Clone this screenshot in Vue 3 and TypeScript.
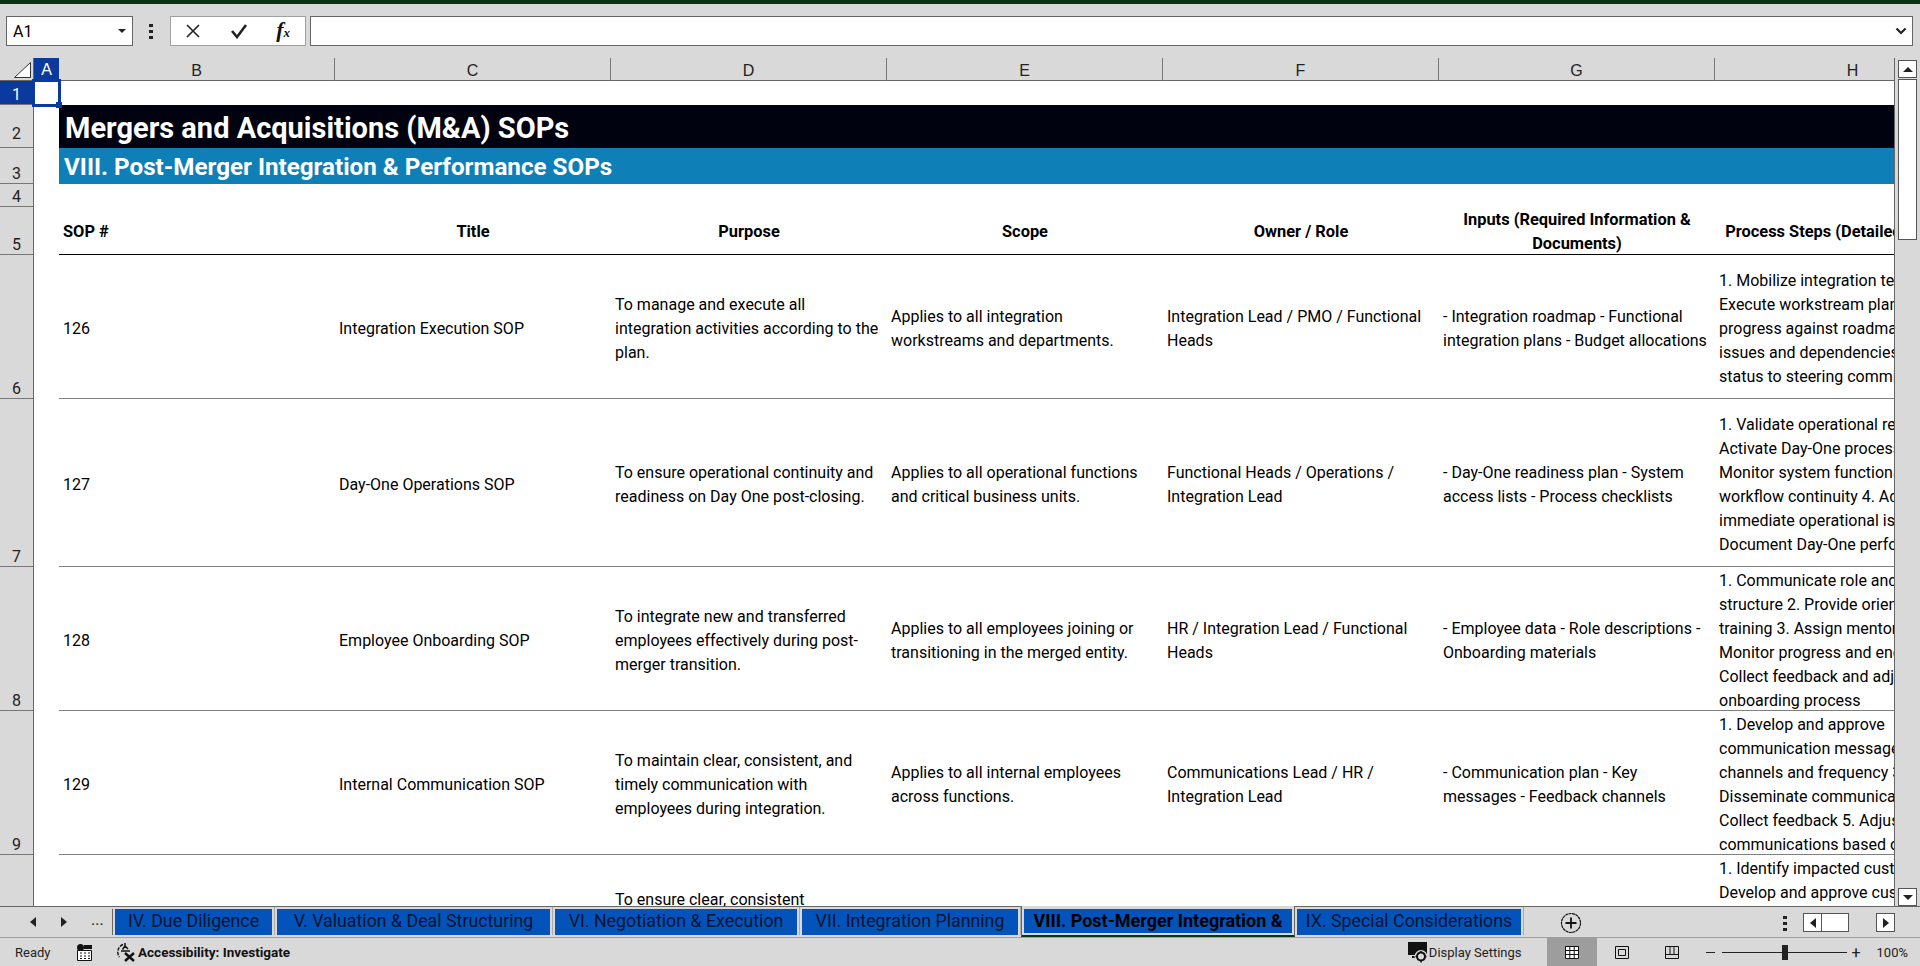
<template>
  <div class="excel">
    <div class="titlebar"></div>

    <div class="formula-bar">
      <div class="name-box">
        <span>A1</span>
        <svg width="8" height="4" viewBox="0 0 8 4"><path d="M0 0h8L4 4z" fill="#222" /></svg>
      </div>
      <div class="vdots"><i></i><i></i><i></i></div>
      <div class="fx-buttons">
        <svg width="16" height="16" viewBox="0 0 16 16"><path d="M2 2l12 12M14 2L2 14" stroke="#222" stroke-width="1.6" fill="none" /></svg>
        <svg width="18" height="16" viewBox="0 0 18 16"><path d="M2 8l5 6L16 2" stroke="#222" stroke-width="2.6" fill="none" /></svg>
        <span class="fx">f<small>x</small></span>
      </div>
      <div class="formula-input">
        <svg width="12" height="8" viewBox="0 0 12 8"><path d="M1.5 1.5L6 6l4.500-4.500" stroke="#222" stroke-width="2.200" fill="none" /></svg>
      </div>
    </div>

    <div class="workarea">
      <div class="sheet">
        <div class="corner">
          <svg width="17" height="16" viewBox="0 0 17 16"><path d="M16.500 0.500V15.500H0.500z" fill="#fff" stroke="#333" /></svg>
        </div>
        <div v-for="c in columns" :key="c" class="col-head" :class="{ selected: c === 'A' }">{{ c }}</div>

        <div class="row-head selected">1</div>
        <div class="active-cell"><span class="fill-handle"></span></div>
        <div class="span-cell"></div>

        <div class="row-head tall-label">2</div>
        <div></div>
        <div class="span-cell band-title">Mergers and Acquisitions (M&amp;A) SOPs</div>

        <div class="row-head">3</div>
        <div></div>
        <div class="span-cell band-sub">VIII. Post-Merger Integration &amp; Performance SOPs</div>

        <div class="row-head">4</div>
        <div></div>
        <div class="span-cell"></div>

        <div class="row-head">5</div>
        <div></div>
        <div class="th left">SOP #</div>
        <div v-for="h in headers" :key="h" class="th">{{ h }}</div>

        <template v-for="r in rows" :key="r.label">
          <div class="row-head">{{ r.label }}</div>
          <div></div>
          <div class="td">{{ r.num }}</div>
          <div class="td">{{ r.title }}</div>
          <div class="td" :class="{ 'td-raised': r.label === 10 }">{{ r.purpose.join("\n") }}</div>
          <div class="td">{{ r.scope.join("\n") }}</div>
          <div class="td">{{ r.owner.join("\n") }}</div>
          <div class="td">{{ r.inputs.join("\n") }}</div>
          <div class="td">{{ r.steps.join("\n") }}</div>
        </template>
      </div>

      <div class="vscroll">
        <div class="scroll-btn">
          <svg width="10" height="5" viewBox="0 0 10 5"><path d="M5 0l5 5H0z" fill="#222" /></svg>
        </div>
        <div class="vthumb"></div>
        <div class="scroll-btn down">
          <svg width="10" height="5" viewBox="0 0 10 5"><path d="M0 0h10L5 5z" fill="#222" /></svg>
        </div>
      </div>
    </div>

    <div class="tabstrip">
      <div class="tab-nav">
        <svg width="6" height="10" viewBox="0 0 6 10"><path d="M6 0v10L0 5z" fill="#222" /></svg>
        <svg width="6" height="10" viewBox="0 0 6 10"><path d="M0 0v10l6-5z" fill="#222" /></svg>
        <span class="ellipsis">...</span>
      </div>
      <div
        v-for="t in tabs"
        :key="t.name"
        class="tab-wrap"
        :class="{ active: t.active }"
      >
        <div class="tab" :style="{ width: t.width + 'px' }">{{ t.name }}</div>
      </div>
      <div class="add-sheet">
        <svg width="22" height="22" viewBox="0 0 22 22">
          <circle cx="11" cy="11" r="9.500" fill="none" stroke="#111" stroke-width="1.200" stroke-dasharray="3 0.500" />
          <path d="M11 5.500v11M5.500 11h11" stroke="#111" stroke-width="1.800" />
        </svg>
      </div>
      <div class="strip-end">
        <div class="vdots"><i></i><i></i><i></i></div>
        <div class="hscroll">
          <div class="hbtn">
            <svg width="6" height="10" viewBox="0 0 6 10"><path d="M6 0v10L0 5z" fill="#222" /></svg>
          </div>
          <div class="hthumb"></div>
          <div class="hbtn right">
            <svg width="6" height="10" viewBox="0 0 6 10"><path d="M0 0v10l6-5z" fill="#222" /></svg>
          </div>
        </div>
      </div>
    </div>

    <div class="statusbar">
      <span class="ready">Ready</span>
      <svg class="calc" width="15" height="17" viewBox="0 0 15 17">
        <circle cx="3.500" cy="3.500" r="3.500" fill="#111" />
        <path d="M7 1h8v4H7z" fill="#111" />
        <path d="M0.500 6.500h14v10H0.500z" fill="#fff" stroke="#111" />
        <path d="M3 9h2M7 9h2M11 9h2M3 12h2M7 12h2M11 12h2M3 14.500h2M7 14.500h2M11 14.500h2" stroke="#111" stroke-width="1.200" />
      </svg>
      <svg class="a11y" width="20" height="20" viewBox="0 0 20 20">
        <path d="M7 2.500A8 8 0 0 0 3.500 15" fill="none" stroke="#111" stroke-width="1.400" stroke-dasharray="3.500 1.200" />
        <path d="M9 1v3M9 4L6.500 7.500M9 4l3 3M5 9h9" fill="none" stroke="#111" stroke-width="1.500" />
        <path d="M9 11l9 8M18 11l-9 8" stroke="#111" stroke-width="2.400" />
      </svg>
      <span class="a11y-text">Accessibility: Investigate</span>

      <svg class="display-icon" width="20" height="21" viewBox="0 0 20 21">
        <path d="M0 0h19v13H0zM4 14h4v2H4z" fill="#111" />
        <circle cx="13" cy="14.500" r="6.500" fill="#d9d9d9" />
        <circle cx="13" cy="14.500" r="4" fill="none" stroke="#111" stroke-width="2" />
        <path d="M13 9v2M13 18v2.500M7.500 14.500h2M16.500 14.500h2M9.500 11l1.200 1.200M15.300 16.800l1.200 1.200M16.500 11l-1.200 1.200M10.700 16.800l-1.200 1.200" stroke="#111" stroke-width="1.500" />
      </svg>
      <span class="display-text">Display Settings</span>

      <div class="view-btn on">
        <svg width="14" height="13" viewBox="0 0 14 13">
          <path d="M0.500 0.500h13v12h-13zM0.500 4.500h13M0.500 8.500h13M4.800 0.500v12M9.200 0.500v12" fill="#fff" stroke="#111" />
        </svg>
      </div>
      <div class="view-btn">
        <svg width="14" height="13" viewBox="0 0 14 13">
          <path d="M0.500 0.500h13v12h-13z" fill="none" stroke="#111" />
          <path d="M3.500 3.500h7v6h-7z" fill="none" stroke="#111" />
        </svg>
      </div>
      <div class="view-btn">
        <svg width="14" height="13" viewBox="0 0 14 13">
          <path d="M0.500 0.500h13v12h-13zM0.500 8.500h13M5 0.500v8M9 0.500v8" fill="none" stroke="#111" />
        </svg>
      </div>
      <div class="zoom">
        <span class="zoom-minus"></span>
        <div class="slider"><span class="slider-thumb"></span></div>
        <span class="zoom-plus">+</span>
        <span class="zoom-val">100%</span>
      </div>
    </div>
  </div>
</template>

<script setup lang="ts">
interface SopRow {
  label: number;
  num: string;
  title: string;
  purpose: string[];
  scope: string[];
  owner: string[];
  inputs: string[];
  steps: string[];
}

interface SheetTab {
  name: string;
  width: number;
  active?: boolean;
}

const columns = ["A", "B", "C", "D", "E", "F", "G", "H"];

const headers = [
  "Title",
  "Purpose",
  "Scope",
  "Owner / Role",
  "Inputs (Required Information &\nDocuments)",
  "Process Steps (Detailed Workflow)",
];

const rows: SopRow[] = [
  {
    label: 6,
    num: "126",
    title: "Integration Execution SOP",
    purpose: ["To manage and execute all", "integration activities according to the", "plan."],
    scope: ["Applies to all integration", "workstreams and departments."],
    owner: ["Integration Lead / PMO / Functional", "Heads"],
    inputs: ["- Integration roadmap - Functional", "integration plans - Budget allocations"],
    steps: [
      "1. Mobilize integration teams 2.",
      "Execute workstream plans 3. Track",
      "progress against roadmap 4. Resolve",
      "issues and dependencies 5. Report",
      "status to steering committee",
    ],
  },
  {
    label: 7,
    num: "127",
    title: "Day-One Operations SOP",
    purpose: ["To ensure operational continuity and", "readiness on Day One post-closing."],
    scope: ["Applies to all operational functions", "and critical business units."],
    owner: ["Functional Heads / Operations /", "Integration Lead"],
    inputs: ["- Day-One readiness plan - System", "access lists - Process checklists"],
    steps: [
      "1. Validate operational readiness 2.",
      "Activate Day-One processes 3.",
      "Monitor system functionality and",
      "workflow continuity 4. Address",
      "immediate operational issues 5.",
      "Document Day-One performance",
    ],
  },
  {
    label: 8,
    num: "128",
    title: "Employee Onboarding SOP",
    purpose: ["To integrate new and transferred", "employees effectively during post-", "merger transition."],
    scope: ["Applies to all employees joining or", "transitioning in the merged entity."],
    owner: ["HR / Integration Lead / Functional", "Heads"],
    inputs: ["- Employee data - Role descriptions -", "Onboarding materials"],
    steps: [
      "1. Communicate role and",
      "structure 2. Provide orientation and",
      "training 3. Assign mentors 4.",
      "Monitor progress and engagement 5.",
      "Collect feedback and adjust",
      "onboarding process",
    ],
  },
  {
    label: 9,
    num: "129",
    title: "Internal Communication SOP",
    purpose: ["To maintain clear, consistent, and", "timely communication with", "employees during integration."],
    scope: ["Applies to all internal employees", "across functions."],
    owner: ["Communications Lead / HR /", "Integration Lead"],
    inputs: ["- Communication plan - Key", "messages - Feedback channels"],
    steps: [
      "1. Develop and approve",
      "communication messages 2. Define",
      "channels and frequency 3.",
      "Disseminate communications 4.",
      "Collect feedback 5. Adjust",
      "communications based on input",
    ],
  },
  {
    label: 10,
    num: "",
    title: "",
    purpose: ["To ensure clear, consistent", " ", " "],
    scope: [],
    owner: [],
    inputs: [],
    steps: ["1. Identify impacted customers", "Develop and approve customer", " ", " ", " ", " "],
  },
];

const tabs: SheetTab[] = [
  { name: "IV. Due Diligence", width: 157 },
  { name: "V. Valuation & Deal Structuring", width: 273 },
  { name: "VI. Negotiation & Execution", width: 242 },
  { name: "VII. Integration Planning", width: 216 },
  { name: "VIII. Post-Merger Integration &", width: 268, active: true },
  { name: "IX. Special Considerations", width: 224 },
];
</script>

<style scoped>
.excel {
  width: 1920px;
  height: 966px;
  display: flex;
  flex-direction: column;
  overflow: hidden;
  background: #d9d9d9;
  font-family: Roboto, "Liberation Sans", sans-serif;
  color: #000;
}

.titlebar {
  height: 4px;
  background: #0a3515;
}

.formula-bar {
  height: 54px;
  display: flex;
  align-items: flex-start;
  padding: 12px 7px 0 6px;
  box-sizing: border-box;
}

.name-box {
  width: 127px;
  height: 30px;
  background: #fff;
  border: 1px solid #666;
  box-sizing: border-box;
  display: flex;
  align-items: center;
  justify-content: space-between;
  padding: 0 6px 0 6px;
  font-size: 16px;
}

.vdots {
  display: flex;
  flex-direction: column;
  gap: 3px;
  width: 4px;
}

.vdots i {
  display: block;
  width: 4px;
  height: 3px;
  background: #222;
}

.formula-bar > .vdots {
  margin: 8px 17px 0 16px;
}

.fx-buttons {
  width: 136px;
  height: 30px;
  background: #fff;
  border: 1px solid #a0a0a0;
  box-sizing: border-box;
  display: flex;
  align-items: center;
  justify-content: space-between;
  padding: 0 15px 0 14px;
}

.fx {
  font-family: "Liberation Serif", serif;
  font-style: italic;
  font-weight: 700;
  font-size: 22px;
  line-height: 22px;
  color: #111;
}

.fx small {
  font-size: 13px;
}

.formula-input {
  flex: 1;
  height: 30px;
  margin-left: 4px;
  background: #fff;
  border: 1px solid #666;
  box-sizing: border-box;
  display: flex;
  align-items: center;
  justify-content: flex-end;
  padding-right: 5px;
}

.workarea {
  height: 848px;
  display: flex;
}

.sheet {
  width: 1895px;
  height: 848px;
  overflow: hidden;
  display: grid;
  grid-template-columns: 34px 25px 276px 276px 276px 276px 276px 276px 276px;
  grid-template-rows: 23px 24px 43px 36px 23px 48px 144px 168px 144px 144px 144px;
  background: #fff;
  border-right: 1px solid #666;
  box-sizing: border-box;
  font-size: 16px;
}

.corner {
  background: #d9d9d9;
  border-right: 1px solid #666;
  border-bottom: 1px solid #666;
  box-sizing: border-box;
  display: flex;
  align-items: flex-end;
  justify-content: flex-end;
  padding: 0 2px 2px 0;
}

.col-head {
  background: #d9d9d9;
  border-right: 1px solid #777;
  border-bottom: 1px solid #666;
  box-sizing: border-box;
  display: flex;
  align-items: center;
  justify-content: center;
  padding-top: 3px;
  font-family: "Liberation Sans", sans-serif;
  font-size: 16px;
  color: #222;
}

.col-head.selected {
  background: #0a3a9e;
  color: #fff;
  border-right: 0;
  padding-top: 1px;
}

.row-head {
  background: #d9d9d9;
  border-right: 1px solid #666;
  border-bottom: 1px solid #777;
  box-sizing: border-box;
  display: flex;
  align-items: flex-end;
  justify-content: center;
  line-height: 19px;
  font-size: 16px;
  color: #222;
}

.row-head.tall-label {
  padding-bottom: 4px;
}

.row-head.selected {
  background: #0a3a9e;
  color: #fff;
}

.active-cell {
  position: relative;
  outline: 3px solid #0a3a9e;
  outline-offset: -1px;
}

.fill-handle {
  position: absolute;
  right: -3px;
  bottom: -3px;
  width: 6px;
  height: 6px;
  background: #0a3a9e;
}

.span-cell {
  grid-column: 3 / -1;
  display: flex;
  align-items: center;
  box-sizing: border-box;
}

.band-title {
  background: #00020f;
  color: #fff;
  font-weight: 700;
  font-size: 29px;
  padding: 3px 0 0 6px;
}

.band-sub {
  background: #0f7fb8;
  color: #fff;
  font-weight: 700;
  font-size: 24.200px;
  padding: 2px 0 0 5px;
}

.th {
  display: flex;
  align-items: center;
  justify-content: center;
  text-align: center;
  white-space: pre;
  overflow: hidden;
  font-weight: 700;
  line-height: 24px;
  font-size: 16.400px;
  padding-top: 3px;
  border-bottom: 1px solid #000;
  box-sizing: border-box;
}

.th.left {
  justify-content: flex-start;
  padding-left: 4px;
}

.td {
  display: flex;
  align-items: center;
  white-space: pre;
  overflow: hidden;
  line-height: 24px;
  padding: 5px 0 0 4px;
  border-bottom: 1px solid #808080;
  box-sizing: border-box;
}

.td-raised {
  padding-bottom: 10px;
}

.vscroll {
  flex: 1;
  display: flex;
  flex-direction: column;
  padding: 2px 3px 0 3px;
}

.scroll-btn {
  height: 18px;
  width: 19px;
  flex: none;
  background: #fff;
  border: 1px solid #555;
  box-sizing: border-box;
  display: flex;
  align-items: center;
  justify-content: center;
}

.scroll-btn.down {
  margin-top: auto;
}

.vthumb {
  width: 19px;
  height: 161px;
  margin-top: 1px;
  background: #fff;
  border: 1px solid #555;
  box-sizing: border-box;
}

.tabstrip {
  height: 32px;
  flex: none;
  display: flex;
  align-items: flex-start;
  border-top: 1px solid #666;
  border-bottom: 1px solid #a0a0a0;
  box-sizing: border-box;
}

.tab-nav {
  width: 113px;
  height: 26px;
  margin-top: 2px;
  flex: none;
  display: flex;
  align-items: center;
  box-sizing: border-box;
  padding-left: 30px;
  gap: 25px;
  border-right: 1px solid #666;
}

.ellipsis {
  font-size: 16px;
  margin-left: -1px;
  line-height: 16px;
  padding-bottom: 4px;
  color: #222;
}

.tab-wrap {
  display: flex;
  padding: 2px 2px 0 2px;
  flex: none;
  border-right: 1px solid #aaa;
}

.tab {
  height: 26px;
  box-sizing: border-box;
  background: #0453ba;
  color: #061530;
  display: flex;
  align-items: center;
  justify-content: center;
  white-space: nowrap;
  overflow: hidden;
  font-size: 17.800px;
  padding-bottom: 3px;
}

.tab-wrap.active {
  position: relative;
  margin-top: -1px;
  padding: 3px 2px 2px 2px;
  background: #d9d9d9;
  border-left: 1px solid #666;
  border-right: 1px solid #666;
  border-bottom: 2px solid #0a3515;
}

.tab-wrap.active .tab {
  height: 24px;
  font-weight: 700;
  font-size: 18px;
  padding-bottom: 1px;
  color: #000;
}

.add-sheet {
  margin: 5px 0 0 36px;
  display: flex;
}

.strip-end {
  margin-left: auto;
  margin-top: 6px;
  display: flex;
  align-items: flex-start;
  padding-right: 25px;
}

.strip-end .vdots {
  margin: 3px 16px 0 0;
}

.hscroll {
  display: flex;
  width: 92px;
  height: 19px;
}

.hbtn {
  width: 19px;
  height: 19px;
  background: #fff;
  border: 1px solid #555;
  box-sizing: border-box;
  display: flex;
  align-items: center;
  justify-content: center;
}

.hbtn.right {
  margin-left: auto;
}

.hthumb {
  width: 27px;
  height: 19px;
  background: #fff;
  border: 1px solid #555;
  border-left: 0;
  box-sizing: border-box;
}

.statusbar {
  flex: 1;
  display: flex;
  align-items: center;
  font-size: 13px;
  color: #222;
}

.ready {
  margin-left: 15px;
  width: 62px;
}

.calc {
  margin-right: 24px;
}

.a11y {
  margin-right: 2px;
}

.a11y-text {
  font-weight: 700;
  font-size: 13.500px;
  color: #111;
}

.display-icon {
  margin-left: auto;
}

.display-text {
  margin-left: 1px;
  margin-right: 25px;
}

.view-btn {
  width: 50px;
  height: 100%;
  display: flex;
  align-items: center;
  justify-content: center;
}

.view-btn.on {
  background: #9d9d9d;
}

.zoom {
  display: flex;
  align-items: center;
  margin-left: 9px;
  padding-right: 12px;
}

.zoom-minus {
  width: 9px;
  height: 1px;
  background: #222;
  margin-right: 7px;
}

.slider {
  position: relative;
  width: 125px;
  height: 1px;
  background: #222;
}

.slider-thumb {
  position: absolute;
  left: 60px;
  top: -7px;
  width: 6px;
  height: 15px;
  background: #222;
}

.zoom-plus {
  margin-left: 5px;
  font-size: 16px;
  width: 25px;
}

.zoom-val {
  font-size: 13px;
}
</style>

<style>
html,
body {
  margin: 0;
  background: #d9d9d9;
}
</style>
